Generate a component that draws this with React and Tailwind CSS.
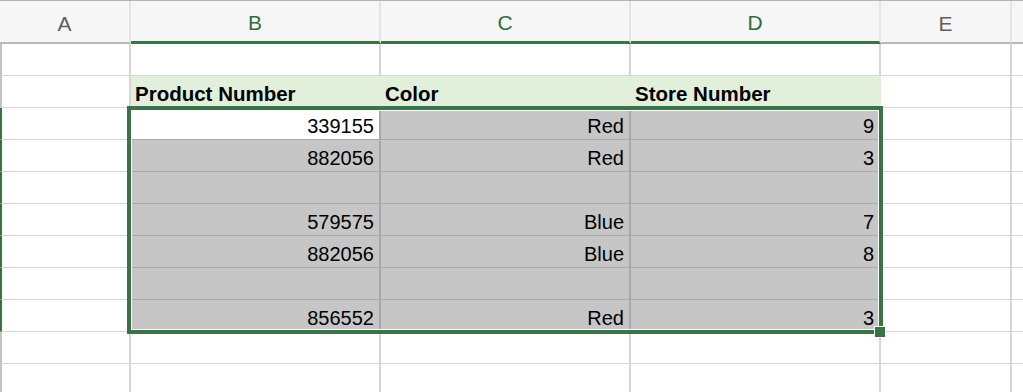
import React from "react";

const GREEN = "#3a7347";

const rows = [
    { cells: ["", "", ""] },
    { head: true, cells: ["Product Number", "Color", "Store Number"] },
    { sel: true, cells: ["339155", "Red", "9"] },
    { sel: true, cells: ["882056", "Red", "3"] },
    { sel: true, cells: ["", "", ""] },
    { sel: true, cells: ["579575", "Blue", "7"] },
    { sel: true, cells: ["882056", "Blue", "8"] },
    { sel: true, cells: ["", "", ""] },
    { sel: true, cells: ["856552", "Red", "3"] },
    { cells: ["", "", ""] },
    { cells: ["", "", ""] },
];

const ColHeader = ({ label, active, width }) => (
    <div
        className={`${width} h-[43px] flex items-center justify-center bg-[#f6f6f6] border-r-2 border-r-[#e4e4e4] ${
            active ? "border-b-[3px] border-b-[#3a7347] text-[#2e6e3d]" : "border-b-2 border-b-[#b8b8b8] text-[#5e5e5e]"
        } text-[21px] leading-none pt-[3px]`}
    >
        {label}
    </div>
);

const Cell = ({ row, value, index, first }) => {
    if (row.head) {
        return (
            <div className="w-[250px] h-full flex items-end pl-[4px] pb-[3px] bg-[#e2efda] border-b border-[#d4d4d4] font-bold text-[20.5px] leading-[20px] text-black">
                {value}
            </div>
        );
    }
    if (row.sel) {
        const active = first && index === 0;
        return (
            <div
                className={`w-[250px] h-full flex items-end justify-end pr-[5px] pb-[3px] border-r-2 border-b text-[20px] leading-[20px] text-black ${
                    active ? "bg-white border-r-[#a9a9a9] border-b-[#a9a9a9]" : "bg-[#c6c6c6] border-[#a9a9a9]"
                }`}
            >
                {value}
            </div>
        );
    }
    return <div className="w-[250px] h-full border-r-2 border-b border-[#d6d6d6]" />;
};

export default function App() {
    return (
        <div
            className="relative w-[1023px] h-[392px] overflow-hidden bg-white"
            style={{ fontFamily: '"Liberation Sans", Arial, sans-serif' }}
        >
            {/* column letters */}
            <div className="flex border-t border-[#b4b4b4]">
                <ColHeader label="A" width="w-[131px]" />
                <ColHeader label="B" width="w-[250px]" active />
                <ColHeader label="C" width="w-[250px]" active />
                <ColHeader label="D" width="w-[250px]" active />
                <ColHeader label="E" width="w-[131px]" />
                <div className="flex-1 h-[43px] bg-[#f6f6f6] border-b-2 border-b-[#b8b8b8]" />
            </div>

            {/* sheet body */}
            {rows.map((row, r) => (
                <div key={r} className="flex h-[32px]">
                    <div
                        className={`w-[131px] h-full border-l-2 border-r-2 border-b border-r-[#d6d6d6] border-b-[#d6d6d6] ${
                            row.sel ? "border-l-[#3a7347]" : "border-l-[#c4c4c4]"
                        }`}
                    />
                    {row.cells.map((v, i) => (
                        <Cell key={i} row={row} value={v} index={i} first={r === 2} />
                    ))}
                    <div className="w-[131px] h-full border-r-2 border-b border-[#d6d6d6]" />
                    <div className="flex-1 h-full border-b border-[#d6d6d6]" />
                </div>
            ))}

            {/* selection outline + fill handle */}
            <div
                className="absolute left-[127px] top-[106px] w-[756px] h-[228px] border-[4px] shadow-[inset_0_0_0_1px_#ffffff] pointer-events-none"
                style={{ borderColor: GREEN }}
            />
            <div className="absolute left-[874px] top-[326px] w-[12px] h-[12px] bg-[#3a7347] border border-white" />
        </div>
    );
}
